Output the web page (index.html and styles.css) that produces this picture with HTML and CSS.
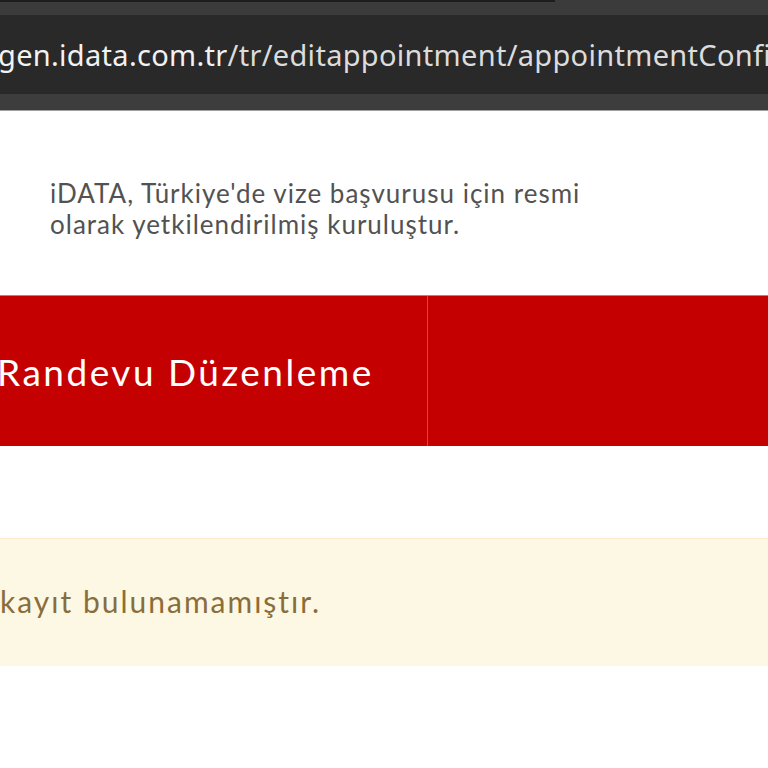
FILE: index.html
```html
<!DOCTYPE html>
<html lang="tr">
<head>
<meta charset="utf-8">
<title>iDATA - Randevu Düzenleme</title>
<link rel="stylesheet" href="styles.css">
</head>
<body>
<header class="chrome">
  <div class="tabstrip"><div class="tab-edge"></div></div>
  <div class="omnibox"><span class="url"><span class="domain">gen.idata.com.tr</span><span class="path">/tr/editappointment/appointmentConfi</span></span></div>
  <div class="toolbar"></div>
</header>
<main class="page">
  <section class="intro">
    <p class="intro-text">iDATA, Türkiye'de vize başvurusu için resmi<br>olarak yetkilendirilmiş kuruluştur.</p>
  </section>
  <section class="hero">
    <div class="hero-title"><h1>Randevu Düzenleme</h1></div>
    <div class="hero-side"></div>
  </section>
  <section class="alert"><p class="alert-text"><span class="hidden-prefix">Sistemde </span>kayıt bulunamamıştır.</p></section>
</main>
</body>
</html>
```
FILE: styles.css
```css
html, body {
  margin: 0;
  padding: 0;
  background: #ffffff;
  overflow: hidden;
}
body {
  width: 768px;
  height: 768px;
  font-family: "Lato", "Noto Sans", sans-serif;
}
.chrome {
  display: flex;
  flex-direction: column;
}
.tabstrip {
  height: 15px;
  background: #3b3b3b;
}
.tab-edge {
  width: 555px;
  height: 2px;
  background: #1d1d1d;
}
.omnibox {
  height: 79px;
  background: #292929;
  overflow: hidden;
  white-space: nowrap;
}
.url {
  display: block;
  margin-left: -2px;
  font-family: "Noto Sans", "Open Sans", sans-serif;
  font-size: 29px;
  letter-spacing: 0.3px;
  line-height: 80px;
  color: #e4e4e4;
}
.domain { color: #f2f2f2; }
.path { color: #dcdcdc; }
.toolbar {
  height: 16px;
  background: #3d3d3d;
  border-bottom: 1px solid #a0a0a0;
}
.page {
  display: flex;
  flex-direction: column;
}
.intro {
  padding: 67px 0 0 50px;
  height: 117px;
}
.intro-text {
  margin: 0;
  font-size: 26px;
  letter-spacing: 1px;
  line-height: 31px;
  color: #525252;
}
.hero {
  display: grid;
  grid-template-columns: 428px 1fr;
  height: 150px;
  background: #c40000;
  border-top: 1px solid #e86a6a;
}
.hero-title {
  border-right: 1px solid #e2403f;
  display: flex;
  align-items: center;
  overflow: hidden;
}
.hero-title h1 {
  margin: 0 0 0 -3px;
  font-weight: 400;
  font-size: 37px;
  letter-spacing: 2.5px;
  color: #ffffff;
  white-space: nowrap;
}
.alert {
  margin-top: 92px;
  height: 127px;
  background: #fcf8e3;
  border-top: 1px solid #faebcc;
  display: flex;
  align-items: center;
  overflow: hidden;
}
.alert-text {
  margin: 0 0 4px 0;
  font-size: 30px;
  letter-spacing: 2px;
  color: #8a6d3b;
  white-space: nowrap;
}
.hidden-prefix {
  display: inline-block;
  width: 0;
  direction: rtl;
  white-space: nowrap;
}
```
